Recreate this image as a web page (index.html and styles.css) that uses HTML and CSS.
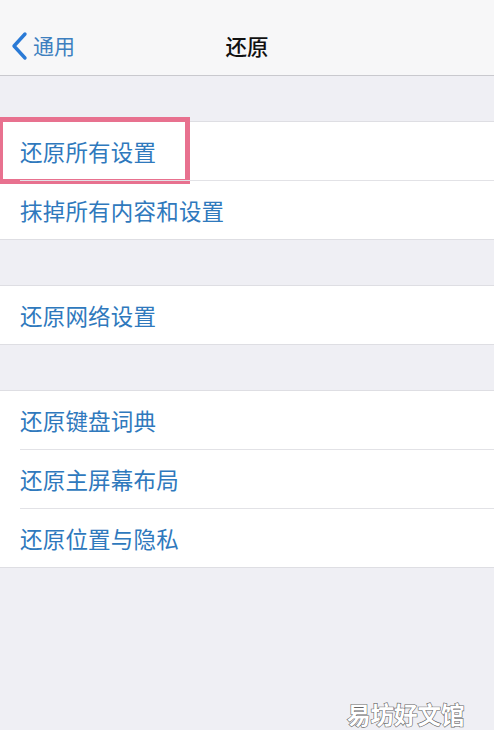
FILE: index.html
```html
<!DOCTYPE html>
<html lang="zh-CN">
<head>
<meta charset="utf-8">
<title>还原</title>
<link rel="stylesheet" href="styles.css">
</head>
<body>
<div class="page">
  <header class="nav">
    <div class="back">
      <svg class="chev" width="18" height="30" viewBox="0 0 18 30"><path d="M15 3 L4 15 L15 27" fill="none" stroke="#2a7ad6" stroke-width="3.4" stroke-linecap="round" stroke-linejoin="round"/></svg>
      <span class="back-text">通用</span>
    </div>
    <div class="title">还原</div>
  </header>

  <section class="group g1">
    <div class="row first">
      <span class="label">还原所有设置</span>
      <div class="highlight"></div>
    </div>
    <div class="row"><span class="label">抹掉所有内容和设置</span></div>
  </section>

  <section class="group">
    <div class="row"><span class="label">还原网络设置</span></div>
  </section>

  <section class="group">
    <div class="row"><span class="label">还原键盘词典</span></div>
    <div class="row"><span class="label">还原主屏幕布局</span></div>
    <div class="row"><span class="label">还原位置与隐私</span></div>
  </section>

  <div class="watermark">易坊好文馆</div>
</div>
</body>
</html>
```

FILE: styles.css
```css
* { box-sizing: border-box; }
html, body {
  margin: 0;
  padding: 0;
  background: #efeff4;
}
body {
  font-family: "Noto Sans CJK SC", "Noto Sans", sans-serif;
}
.page {
  position: relative;
  width: 494px;
  height: 730px;
  overflow: hidden;
  background: #efeff4;
}
.nav {
  position: relative;
  height: 76px;
  padding-top: 16px;
  background: #f7f7f8;
  border-bottom: 1px solid #c9c9ce;
  display: flex;
  align-items: center;
  justify-content: center;
}
.back {
  position: absolute;
  left: 10px;
  top: 31px;
  display: flex;
  align-items: center;
  gap: 5px;
}
.chev { display: block; }
.back-text {
  font-size: 21px;
  line-height: 30px;
  color: #3d7fbf;
  margin-top: -3px;
}
.title {
  font-size: 21.5px;
  font-weight: 500;
  color: #111;
}
.group {
  margin-top: 45px;
  background: #fff;
  border-top: 1px solid #dedee3;
  border-bottom: 1px solid #dedee3;
}
.row {
  position: relative;
  height: 58px;
  display: flex;
  align-items: center;
  padding-left: 20px;
}
.row + .row {
  height: 59px;
}
.row + .row::before {
  content: "";
  position: absolute;
  left: 20px;
  right: 0;
  top: 0;
  height: 1px;
  background: #e2e2e6;
}
.label {
  font-size: 22.5px;
  color: #2f79bd;
  letter-spacing: 0.2px;
}
.highlight {
  position: absolute;
  left: -2px;
  top: -5px;
  width: 192px;
  height: 67px;
  border: 5px solid #e8718f;
}
.watermark {
  position: absolute;
  left: 347px;
  bottom: 2px;
  font-size: 23.5px;
  line-height: 28px;
  color: #fff;
  -webkit-text-stroke: 1.2px #666;
  paint-order: stroke fill;
  font-weight: 700;
}
```
